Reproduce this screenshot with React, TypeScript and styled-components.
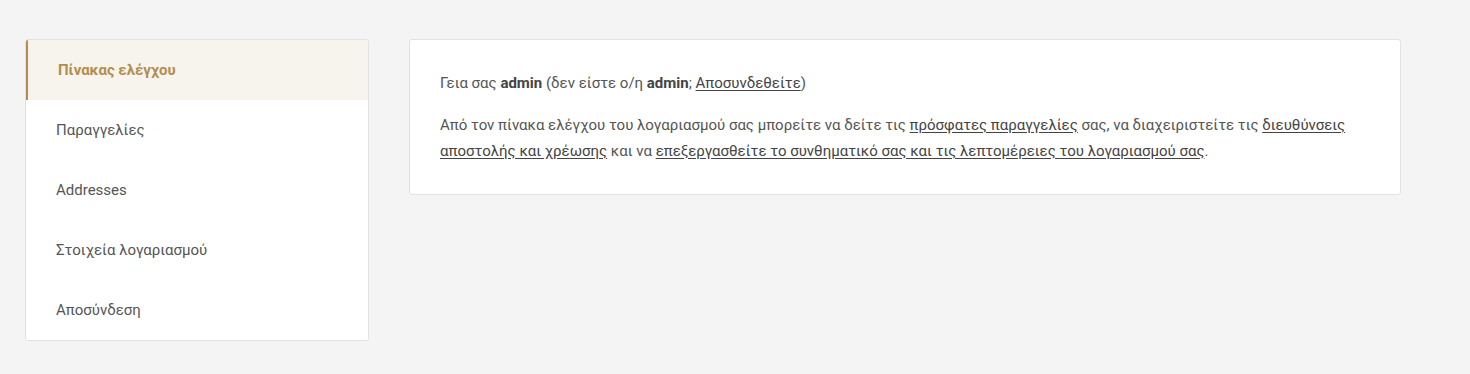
import React from "react";
import styled, { createGlobalStyle } from "styled-components";

const GlobalStyle = createGlobalStyle`
  html, body {
    margin: 0;
    padding: 0;
    background: #f4f4f4;
  }
  body {
    font-family: Roboto, "Noto Sans", "Liberation Sans", sans-serif;
    font-size: 15px;
    color: #555;
  }
`;

const Page = styled.div`
  display: flex;
  align-items: flex-start;
  gap: 40px;
  padding: 39px 25px 33px;
`;

const Nav = styled.nav`
  width: 344px;
  flex-shrink: 0;
  box-sizing: border-box;
  background: #fff;
  border: 1px solid #e2e2e2;
  border-radius: 3px;
  overflow: hidden;
`;

const NavItem = styled.a<{ $active?: boolean }>`
  display: flex;
  align-items: center;
  height: 60px;
  box-sizing: border-box;
  padding-left: 30px;
  border-left: ${(p) => (p.$active ? "2px solid #b38d4d" : "0")};
  background: ${(p) => (p.$active ? "#f7f4ee" : "#fff")};
  color: ${(p) => (p.$active ? "#b38d4d" : "#555")};
  font-weight: ${(p) => (p.$active ? 700 : 400)};
  font-size: 15px;
  text-decoration: none;
  cursor: pointer;
`;

const Content = styled.div`
  width: 992px;
  box-sizing: border-box;
  background: #fff;
  border: 1px solid #e2e2e2;
  border-radius: 3px;
  padding: 30px 30px;
`;

const Para = styled.p`
  margin: 0 0 16px;
  line-height: 26px;
  color: #555;

  &:last-child {
    margin-bottom: 0;
  }
`;

const Strong = styled.strong`
  color: #444;
  font-weight: 700;
`;

const Link = styled.a`
  color: #444;
  text-decoration: underline;
  text-underline-offset: 2px;
  cursor: pointer;
`;

const items = [
  "Πίνακας ελέγχου",
  "Παραγγελίες",
  "Addresses",
  "Στοιχεία λογαριασμού",
  "Αποσύνδεση",
];

export default function App() {
  return (
    <>
      <GlobalStyle />
      <Page>
        <Nav>
          {items.map((label, i) => (
            <NavItem key={label} $active={i === 0}>
              {label}
            </NavItem>
          ))}
        </Nav>
        <Content>
          <Para>
            Γεια σας <Strong>admin</Strong> (δεν είστε ο/η <Strong>admin</Strong>;{" "}
            <Link>Αποσυνδεθείτε</Link>)
          </Para>
          <Para>
            Από τον πίνακα ελέγχου του λογαριασμού σας μπορείτε να δείτε τις{" "}
            <Link>πρόσφατες παραγγελίες</Link> σας, να διαχειριστείτε τις{" "}
            <Link>διευθύνσεις αποστολής και χρέωσης</Link> και να{" "}
            <Link>επεξεργασθείτε το συνθηματικό σας και τις λεπτομέρειες του λογαριασμού σας</Link>.
          </Para>
        </Content>
      </Page>
    </>
  );
}
